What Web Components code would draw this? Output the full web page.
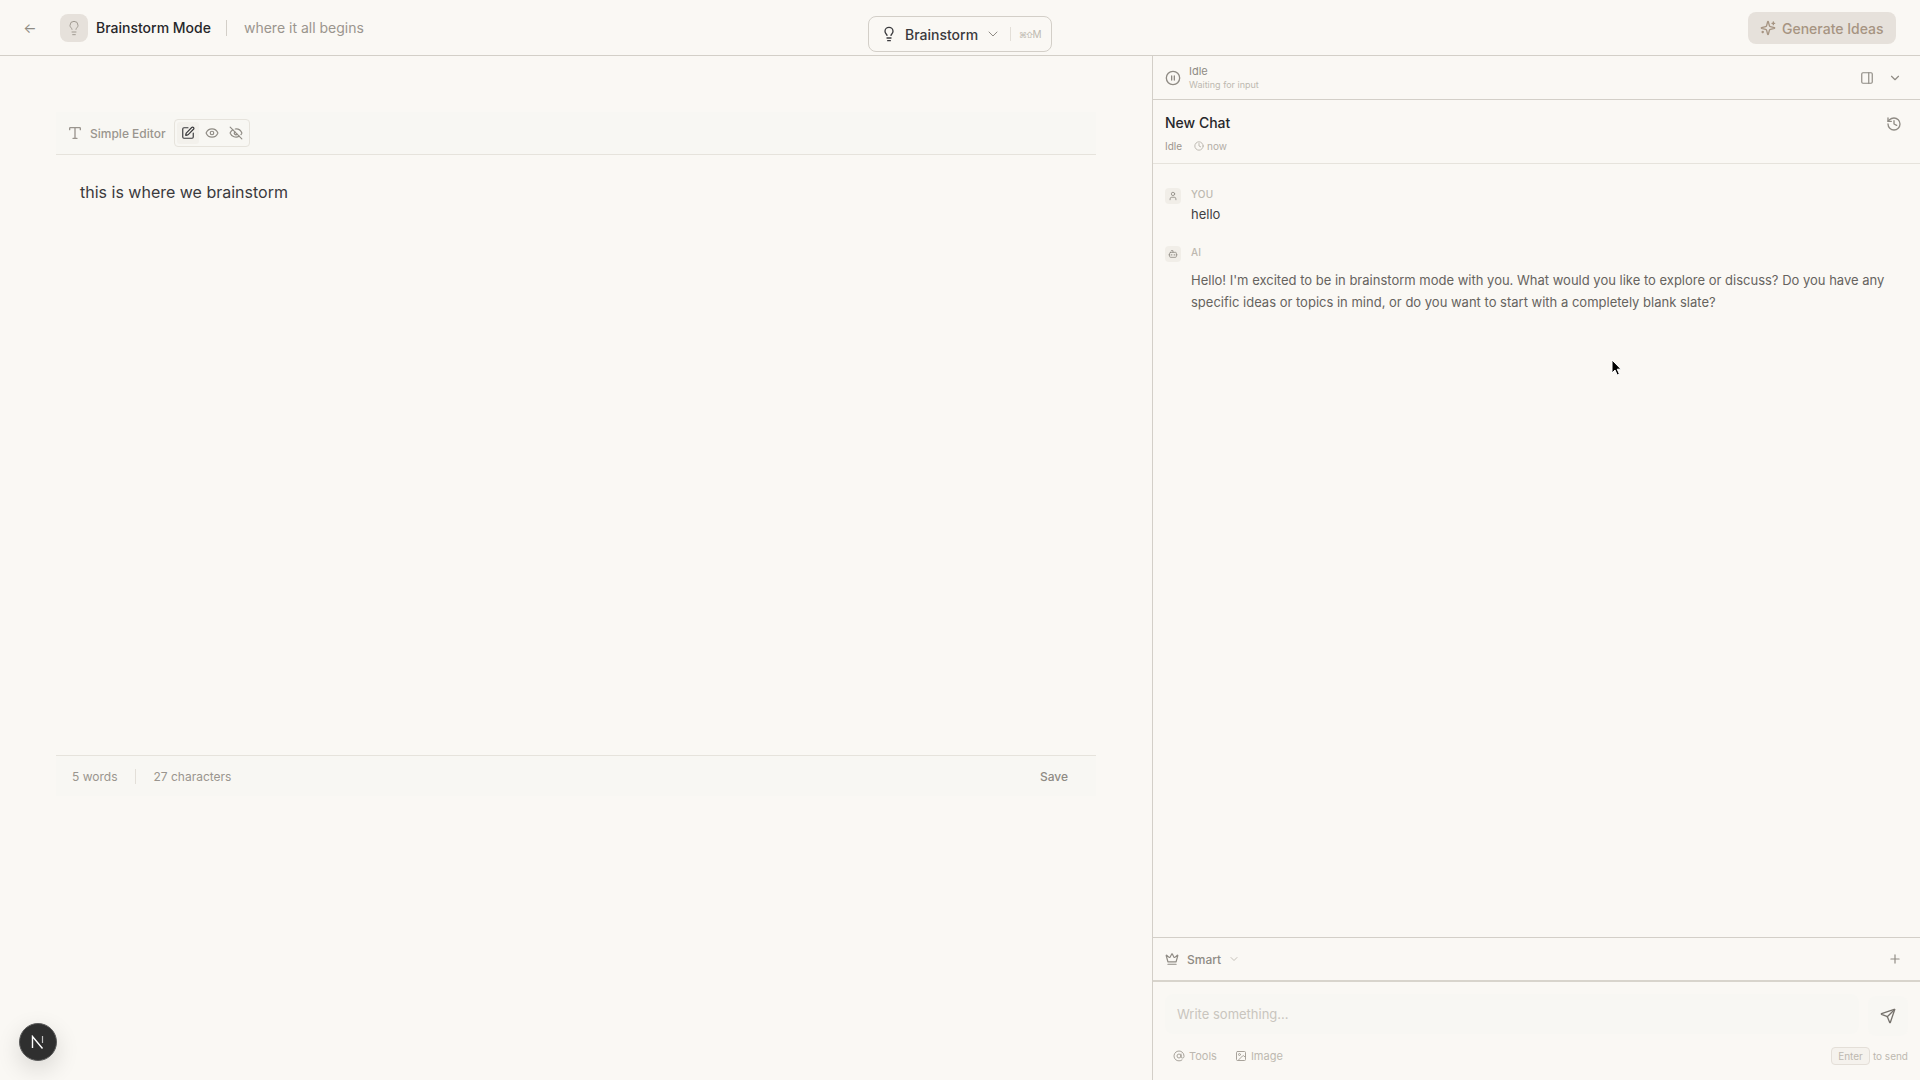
<!DOCTYPE html>
<html lang="en">
<head>
<meta charset="utf-8">
<title>Brainstorm Mode</title>
<style>
    html, body { margin: 0; height: 100%; }
    body {
        background: #faf8f4;
        color: #27272a;
        font-family: Inter, "Noto Sans", sans-serif;
        overflow: hidden;
    }
</style>
</head>
<body>
<brainstorm-app></brainstorm-app>

<script>
    // Tous les pictos, tracés sur une grille de 24
    const ICONS = {
        'lightbulb': '<path d="M15 14c.2-1 .7-1.7 1.5-2.5 1-.9 1.5-2.2 1.5-3.5A6 6 0 0 0 6 8c0 1 .2 2.2 1.5 3.5.7.7 1.3 1.5 1.5 2.5"/><path d="M9 18h6"/><path d="M10 22h4"/>',
        'chevron-down': '<path d="m6 9 6 6 6-6"/>',
        'sparkles': '<path d="M9.937 15.5A2 2 0 0 0 8.5 14.063l-6.135-1.582a.5.5 0 0 1 0-.962L8.5 9.936A2 2 0 0 0 9.937 8.5l1.582-6.135a.5.5 0 0 1 .963 0L14.063 8.5A2 2 0 0 0 15.5 9.937l6.135 1.581a.5.5 0 0 1 0 .964L15.5 14.063a2 2 0 0 0-1.437 1.437l-1.582 6.135a.5.5 0 0 1-.963 0z"/><path d="M20 3v4"/><path d="M22 5h-4"/><path d="M4 17v2"/><path d="M5 18H3"/>',
        'circle-pause': '<circle cx="12" cy="12" r="10"/><path d="M10 15V9"/><path d="M14 15V9"/>',
        'panel-right': '<rect width="18" height="18" x="3" y="3" rx="2"/><path d="M15 3v18"/>',
        'history': '<path d="M3 12a9 9 0 1 0 9-9 9.75 9.75 0 0 0-6.74 2.74L3 8"/><path d="M3 3v5h5"/><path d="M12 7v5l4 2"/>',
        'clock': '<circle cx="12" cy="12" r="10"/><path d="M12 6v6l4 2"/>',
        'type': '<path d="M12 4v16"/><path d="M4 7V5a1 1 0 0 1 1-1h14a1 1 0 0 1 1 1v2"/><path d="M9 20h6"/>',
        'square-pen': '<path d="M12 3H5a2 2 0 0 0-2 2v14a2 2 0 0 0 2 2h14a2 2 0 0 0 2-2v-7"/><path d="M18.375 2.625a1 1 0 0 1 3 3l-9.013 9.014a2 2 0 0 1-.853.505l-2.873.84a.5.5 0 0 1-.62-.62l.84-2.873a2 2 0 0 1 .506-.852z"/>',
        'eye': '<path d="M2.062 12.348a1 1 0 0 1 0-.696 10.75 10.75 0 0 1 19.876 0 1 1 0 0 1 0 .696 10.75 10.75 0 0 1-19.876 0"/><circle cx="12" cy="12" r="3"/>',
        'eye-off': '<path d="M10.733 5.076a10.744 10.744 0 0 1 11.205 6.575 1 1 0 0 1 0 .696 10.747 10.747 0 0 1-1.444 2.49"/><path d="M14.084 14.158a3 3 0 0 1-4.242-4.242"/><path d="M17.479 17.499a10.75 10.75 0 0 1-15.417-5.151 1 1 0 0 1 0-.696 10.75 10.75 0 0 1 4.446-5.143"/><path d="m2 2 20 20"/>',
        'user': '<path d="M19 21v-2a4 4 0 0 0-4-4H9a4 4 0 0 0-4 4v2"/><circle cx="12" cy="7" r="4"/>',
        'bot': '<path d="M12 8V4H8"/><rect width="16" height="12" x="4" y="8" rx="2"/><path d="M2 14h2"/><path d="M20 14h2"/><path d="M15 13v2"/><path d="M9 13v2"/>',
        'crown': '<path d="M11.562 3.266a.5.5 0 0 1 .876 0L15.39 8.87a1 1 0 0 0 1.516.294L21.183 5.5a.5.5 0 0 1 .798.519l-2.834 10.246a1 1 0 0 1-.956.734H5.81a1 1 0 0 1-.957-.734L2.02 6.02a.5.5 0 0 1 .798-.519l4.276 3.664a1 1 0 0 0 1.516-.294z"/><path d="M5 21h14"/>',
        'plus': '<path d="M5 12h14"/><path d="M12 5v14"/>',
        'at-sign': '<circle cx="12" cy="12" r="4"/><path d="M16 8v5a3 3 0 0 0 6 0v-1a10 10 0 1 0-4 8"/>',
        'image': '<rect width="18" height="18" x="3" y="3" rx="2"/><circle cx="9" cy="9" r="2"/><path d="m21 15-3.086-3.086a2 2 0 0 0-2.828 0L6 21"/>',
        'send': '<path d="M14.536 21.686a.5.5 0 0 0 .937-.024l6.5-19a.496.496 0 0 0-.635-.635l-19 6.5a.5.5 0 0 0-.024.937l7.93 3.18a2 2 0 0 1 1.112 1.11z"/><path d="m21.854 2.147-10.94 10.939"/>'
    };

    class UiIcon extends HTMLElement {
        connectedCallback() {
            const size = this.getAttribute('size') || 16;
            const stroke = this.getAttribute('stroke') || 2;
            this.attachShadow({ mode: 'open' });
            this.shadowRoot.innerHTML = `
                <style>
                    :host { display: inline-flex; flex: none; }
                    svg { display: block; }
                </style>
                <svg xmlns="http://www.w3.org/2000/svg" width="${size}" height="${size}" viewBox="0 0 24 24" fill="none"
                     stroke="currentColor" stroke-width="${stroke}" stroke-linecap="round" stroke-linejoin="round">${ICONS[this.getAttribute('name')]}</svg>
            `;
        }
    }

    class TopBar extends HTMLElement {
        constructor() {
            super();
            this.attachShadow({ mode: 'open' });
            this.shadowRoot.innerHTML = `
                <style>
                    :host {
                        display: grid;
                        grid-template-columns: 1fr auto 1fr;
                        height: 55px;
                        border-bottom: 1px solid #d3cfc8;
                        flex: none;
                    }
                    .left { display: flex; align-items: center; padding-left: 22px; }
                    .back {
                        color: #8f8b84;
                        width: 16px;
                        text-align: center;
                        font-size: 14px;
                        margin-right: 22px;
                    }
                    .tile {
                        width: 28px; height: 28px;
                        border-radius: 8px;
                        background: #e6e1db;
                        color: #a09a91;
                        display: flex; align-items: center; justify-content: center;
                        margin-right: 8px;
                    }
                    .title { font-size: 14px; font-weight: 500; color: #27272a; }
                    .sep { width: 1px; height: 16px; background: #d3cfc8; margin: 0 17px 0 15px; }
                    .sub { font-size: 14px; color: #9a958e; }
                    .mode {
                        align-self: start;
                        margin-top: 16px;
                        width: 184px; height: 36px;
                        box-sizing: border-box;
                        border: 1px solid #d3cfc8;
                        border-radius: 8px;
                        display: flex; align-items: center;
                        padding-left: 12px;
                        color: #3a3a3d;
                    }
                    .mode .name { font-size: 14px; font-weight: 500; margin: 0 7px 0 8px; }
                    .mode .chev { color: #8f8b84; display: flex; }
                    .mode .bar { width: 1px; height: 14px; background: #e3dfd8; margin: 0 8px 0 9px; }
                    .mode .kbd { font-size: 10px; color: #bdb8b0; white-space: nowrap; }
                    .mode .kbd i { font-style: normal; font-size: 8px; letter-spacing: -1.5px; }
                    .right { display: flex; justify-content: flex-end; padding: 12px 24px 0 0; align-items: flex-start; }
                    .gen {
                        height: 32px; width: 148px;
                        box-sizing: border-box;
                        border-radius: 8px;
                        background: #e6e1db;
                        color: #a69482;
                        display: flex; align-items: center; gap: 6px;
                        padding-left: 12px;
                        font-size: 14px; font-weight: 500;
                    }
                </style>
                <div class="left">
                    <span class="back">←</span>
                    <span class="tile"><ui-icon name="lightbulb" size="16" stroke="1.5"></ui-icon></span>
                    <span class="title">Brainstorm Mode</span>
                    <span class="sep"></span>
                    <span class="sub">where it all begins</span>
                </div>
                <div class="mode">
                    <ui-icon name="lightbulb" size="16"></ui-icon>
                    <span class="name">Brainstorm</span>
                    <span class="chev"><ui-icon name="chevron-down" size="16" stroke="1.5"></ui-icon></span>
                    <span class="bar"></span>
                    <span class="kbd"><i>⌘⇧</i>M</span>
                </div>
                <div class="right">
                    <div class="gen"><ui-icon name="sparkles" size="16"></ui-icon>Generate Ideas</div>
                </div>
            `;
        }
    }

    class EditorPane extends HTMLElement {
        constructor() {
            super();
            this.attachShadow({ mode: 'open' });
            this.shadowRoot.innerHTML = `
                <style>
                    :host {
                        display: block;
                        flex: 1;
                        min-width: 0;
                        padding: 56px 56px 0;
                    }
                    .tools {
                        height: 42px;
                        box-sizing: content-box;
                        background: #f8f7f3;
                        border-bottom: 1px solid #e6e3dc;
                        display: flex; align-items: center;
                        padding-left: 11px;
                        color: #9a958e;
                        font-size: 12px; font-weight: 500;
                    }
                    .tools .label { margin: 0 8px 0 7px; }
                    .group {
                        display: flex; gap: 2px;
                        padding: 2px;
                        border: 1px solid #e6e3dc;
                        border-radius: 4px;
                    }
                    .group span {
                        width: 22px; height: 22px;
                        border-radius: 3px;
                        display: flex; align-items: center; justify-content: center;
                        color: #8f8b84;
                    }
                    .group span.on { background: #f3f1ec; color: #3a3a3d; }
                    .body {
                        height: 575px;
                        padding: 25px 24px 0;
                        font-size: 16px;
                        line-height: 24px;
                        color: #3a3a3d;
                    }
                    .foot {
                        height: 40px;
                        background: #f8f7f3;
                        border-top: 1px solid #e6e3dc;
                        display: flex; align-items: center;
                        padding: 0 28px 0 16px;
                        font-size: 12px;
                        color: #9a958e;
                    }
                    .foot .sep { width: 1px; height: 15px; background: #e3dfd8; margin: 0 17px 0 18px; }
                    .foot .save { margin-left: auto; font-weight: 500; color: #8f8b84; }
                </style>
                <div class="tools">
                    <ui-icon name="type" size="16"></ui-icon>
                    <span class="label">Simple Editor</span>
                    <div class="group">
                        <span class="on"><ui-icon name="square-pen" size="14"></ui-icon></span>
                        <span><ui-icon name="eye" size="14"></ui-icon></span>
                        <span><ui-icon name="eye-off" size="14"></ui-icon></span>
                    </div>
                </div>
                <div class="body"><slot></slot></div>
                <div class="foot">
                    <span>5 words</span>
                    <span class="sep"></span>
                    <span>27 characters</span>
                    <span class="save">Save</span>
                </div>
            `;
        }
    }

    class ChatMessage extends HTMLElement {
        constructor() {
            super();
            this.attachShadow({ mode: 'open' });
            const isAi = this.getAttribute('role-name') === 'AI';
            this.shadowRoot.innerHTML = `
                <style>
                    :host { display: flex; gap: 10px; }
                    .avatar {
                        width: 16px; height: 16px;
                        border-radius: 4px;
                        background: #f1eee8;
                        color: #8f8b84;
                        display: flex; align-items: center; justify-content: center;
                        flex: none;
                    }
                    .who { font-size: 10px; font-weight: 500; line-height: 12px; color: #bdb8b0; letter-spacing: .25px; }
                    .text { font-size: 13px; line-height: ${isAi ? 22 : 20}px; margin-top: ${isAi ? 11 : 4}px; color: ${isAi ? '#66635e' : '#3f3f42'}; }
                </style>
                <span class="avatar"><ui-icon name="${isAi ? 'bot' : 'user'}" size="10"></ui-icon></span>
                <div>
                    <div class="who">${this.getAttribute('role-name')}</div>
                    <div class="text"><slot></slot></div>
                </div>
            `;
        }
    }

    class ChatPanel extends HTMLElement {
        constructor() {
            super();
            this.attachShadow({ mode: 'open' });
            this.shadowRoot.innerHTML = `
                <style>
                    :host {
                        display: flex;
                        flex-direction: column;
                        width: 768px;
                        flex: none;
                        box-sizing: border-box;
                        border-left: 1px solid #d3cfc8;
                    }
                    .status {
                        height: 43px; flex: none;
                        border-bottom: 1px solid #d3cfc8;
                        display: flex; align-items: center;
                        padding: 0 18px 0 12px;
                        color: #8f8b84;
                    }
                    .status .lines { margin-left: 8px; display: flex; flex-direction: column; }
                    .status .a { font-size: 11px; line-height: 13px; color: #8f8b84; }
                    .status .b { font-size: 9px; line-height: 13px; color: #bdb8b0; }
                    .status .tail { margin-left: auto; display: flex; align-items: center; gap: 14px; }
                    .head {
                        height: 63px; flex: none;
                        border-bottom: 1px solid #e6e3dc;
                        box-sizing: content-box;
                        padding: 0 18px 0 12px;
                        display: flex; justify-content: space-between;
                    }
                    .head .name { font-size: 14px; font-weight: 500; line-height: 18px; margin-top: 14px; color: #27272a; }
                    .head .meta { display: flex; align-items: center; font-size: 10px; margin-top: 8px; color: #9a958e; }
                    .head .meta .t { display: flex; align-items: center; gap: 3px; margin-left: 12px; color: #b3aea6; }
                    .head .hist { color: #8f8b84; margin-top: 16px; }
                    .list {
                        flex: 1; min-height: 0;
                        padding: 24px 20px 0 12px;
                        display: flex; flex-direction: column; gap: 22px;
                    }
                    .model {
                        height: 42px; flex: none;
                        border-top: 1px solid #d3cfc8;
                        display: flex; align-items: center;
                        padding: 0 18px 0 12px;
                        font-size: 12px; font-weight: 500; color: #8f8b84;
                    }
                    .model .nm { margin: 0 7px 0 8px; }
                    .model .ch { color: #b3aea6; display: flex; }
                    .model .pl { margin-left: auto; display: flex; }
                    .compose {
                        height: 100px; flex: none;
                        box-sizing: border-box;
                        border-top: 2px solid #d8d4cc;
                        padding: 12px 12px 0 12px;
                    }
                    .row { display: flex; gap: 9px; }
                    .input {
                        flex: 1;
                        height: 40px;
                        border-radius: 8px;
                        background: #f8f7f3;
                        display: flex; align-items: center;
                        padding-left: 12px;
                        font-size: 13px;
                        color: #c9c5be;
                    }
                    .go {
                        width: 40px; height: 40px;
                        margin-top: 2px;
                        border-radius: 8px;
                        background: #f8f7f3;
                        color: #77736d;
                        display: flex; align-items: center; justify-content: center;
                    }
                    .bar {
                        display: flex; align-items: center;
                        margin-top: 11px;
                        padding-left: 8px;
                        font-size: 11px;
                        color: #bdb8b0;
                    }
                    .bar .act { display: flex; align-items: center; gap: 4px; margin-right: 18px; }
                    .bar .act ui-icon { color: #a8a39b; }
                    .bar .hint { margin-left: auto; display: flex; align-items: center; gap: 3px; font-size: 10px; }
                    .bar .kbd {
                        border: 1px solid #e4dfd8;
                        background: #f5f2ed;
                        border-radius: 4px;
                        padding: 0 6px;
                        height: 16px;
                        line-height: 16px;
                        font-size: 10px;
                    }
                </style>
                <div class="status">
                    <ui-icon name="circle-pause" size="16"></ui-icon>
                    <div class="lines"><span class="a">Idle</span><span class="b">Waiting for input</span></div>
                    <div class="tail">
                        <ui-icon name="panel-right" size="14"></ui-icon>
                        <ui-icon name="chevron-down" size="14"></ui-icon>
                    </div>
                </div>
                <div class="head">
                    <div>
                        <div class="name">New Chat</div>
                        <div class="meta">Idle<span class="t"><ui-icon name="clock" size="10"></ui-icon>now</span></div>
                    </div>
                    <span class="hist"><ui-icon name="history" size="16"></ui-icon></span>
                </div>
                <div class="list"><slot></slot></div>
                <div class="model">
                    <ui-icon name="crown" size="14"></ui-icon>
                    <span class="nm">Smart</span>
                    <span class="ch"><ui-icon name="chevron-down" size="12" stroke="1.5"></ui-icon></span>
                    <span class="pl"><ui-icon name="plus" size="14"></ui-icon></span>
                </div>
                <div class="compose">
                    <div class="row">
                        <div class="input">Write something...</div>
                        <div class="go"><ui-icon name="send" size="16"></ui-icon></div>
                    </div>
                    <div class="bar">
                        <span class="act"><ui-icon name="at-sign" size="12"></ui-icon>Tools</span>
                        <span class="act"><ui-icon name="image" size="12"></ui-icon>Image</span>
                        <span class="hint"><span class="kbd">Enter</span>to send</span>
                    </div>
                </div>
            `;
        }
    }

    class DevBadge extends HTMLElement {
        constructor() {
            super();
            this.attachShadow({ mode: 'open' });
            this.shadowRoot.innerHTML = `
                <style>
                    :host {
                        position: fixed;
                        left: 19px; top: 1023px;
                        width: 38px; height: 38px;
                        box-sizing: border-box;
                        border-radius: 50%;
                        background: #2f2f2f;
                        border: 1px solid #5a5a5a;
                        box-shadow: 0 8px 24px rgba(0,0,0,.14);
                        display: flex; align-items: center; justify-content: center;
                    }
                </style>
                <svg width="14" height="14" viewBox="0 0 14 14" fill="none" stroke="#fff">
                    <path d="M1.5 13V1.5L11.5 13.5" stroke-width="1.4"/>
                    <path d="M11.5 1v7" stroke-width="1.2" stroke-opacity=".7"/>
                </svg>
            `;
        }
    }

    class MouseCursor extends HTMLElement {
        constructor() {
            super();
            this.attachShadow({ mode: 'open' });
            this.shadowRoot.innerHTML = `
                <style>
                    :host { position: fixed; left: 1611px; top: 359px; width: 12px; height: 18px; }
                    svg { display: block; }
                </style>
                <svg width="12" height="18" viewBox="0 0 12 18">
                    <path d="M1 1v13l3-3 2.2 5 2.2-1-2.2-4.8H10z" fill="#000" stroke="#fff" stroke-width="1"/>
                </svg>
            `;
        }
    }

    class BrainstormApp extends HTMLElement {
        constructor() {
            super();
            this.attachShadow({ mode: 'open' });
            this.shadowRoot.innerHTML = `
                <style>
                    :host { display: flex; flex-direction: column; height: 100vh; }
                    main { display: flex; flex: 1; min-height: 0; }
                </style>
                <top-bar></top-bar>
                <main>
                    <editor-pane>this is where we brainstorm</editor-pane>
                    <chat-panel>
                        <chat-message role-name="YOU">hello</chat-message>
                        <chat-message role-name="AI">Hello! I'm excited to be in brainstorm mode with you. What would you like to explore or discuss? Do you have any specific ideas or topics in mind, or do you want to start with a completely blank slate?</chat-message>
                    </chat-panel>
                </main>
                <dev-badge></dev-badge>
                <mouse-cursor></mouse-cursor>
            `;
        }
    }

    customElements.define('ui-icon', UiIcon);
    customElements.define('top-bar', TopBar);
    customElements.define('editor-pane', EditorPane);
    customElements.define('chat-message', ChatMessage);
    customElements.define('chat-panel', ChatPanel);
    customElements.define('dev-badge', DevBadge);
    customElements.define('mouse-cursor', MouseCursor);
    customElements.define('brainstorm-app', BrainstormApp);
</script>
</body>
</html>
